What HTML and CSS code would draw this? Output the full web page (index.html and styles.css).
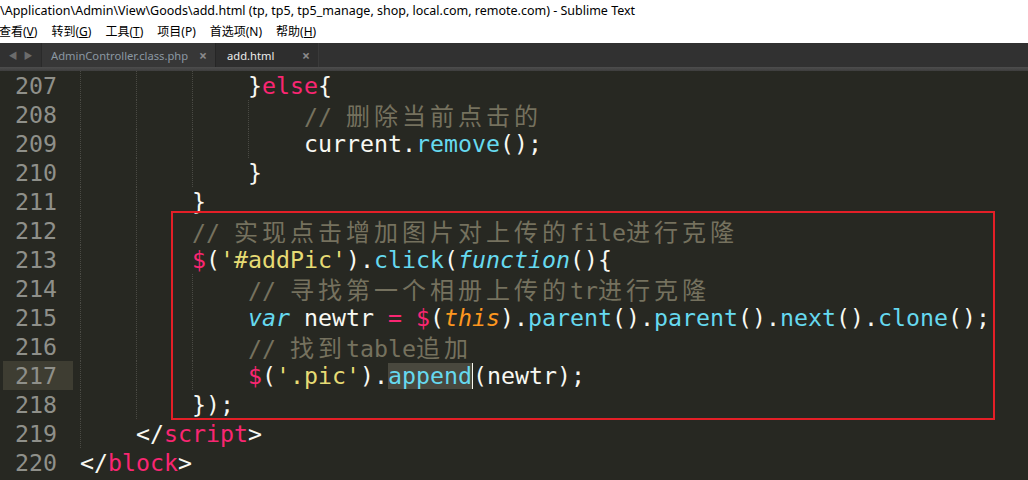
FILE: index.html
```html
<!DOCTYPE html>
<html lang="zh">
<head>
  <meta charset="UTF-8" />
  <title>add.html - Sublime Text</title>
  <link rel="stylesheet" href="styles.css">
</head>
<body>
  <div class="titlebar">\Application\Admin\View\Goods\add.html (tp, tp5, tp5_manage, shop, local.com, remote.com) - Sublime Text</div>

  <div class="menubar">
    <span>查看(<u>V</u>)</span>
    <span>转到(<u>G</u>)</span>
    <span>工具(<u>T</u>)</span>
    <span>项目(P)</span>
    <span>首选项(N)</span>
    <span>帮助(<u>H</u>)</span>
  </div>

  <div class="tabbar">
    <div class="arrows"><span>&#9664;</span><span>&#9654;</span></div>
    <div class="tab">AdminController.class.php<span class="close">&times;</span></div>
    <div class="tab active">add.html<span class="close">&times;</span></div>
  </div>
  <div class="tabstrip"></div>

  <div class="editor">
    <div class="row"><div class="ln">207</div><div class="code"><i class="ind"></i><i class="ind"></i><i class="ind"></i>}<span class="k">else</span>{</div></div>
    <div class="row"><div class="ln">208</div><div class="code"><i class="ind"></i><i class="ind"></i><i class="ind"></i><i class="ind"></i><span class="c">// <span class="cj">删除当前点击的</span></span></div></div>
    <div class="row"><div class="ln">209</div><div class="code"><i class="ind"></i><i class="ind"></i><i class="ind"></i><i class="ind"></i>current.<span class="f">remove</span>();</div></div>
    <div class="row"><div class="ln">210</div><div class="code"><i class="ind"></i><i class="ind"></i><i class="ind"></i>}</div></div>
    <div class="row"><div class="ln">211</div><div class="code"><i class="ind"></i><i class="ind"></i>}</div></div>
    <div class="row"><div class="ln">212</div><div class="code"><i class="ind"></i><i class="ind"></i><span class="c">// <span class="cj">实现点击增加图片对上传的</span>file<span class="cj">进行克隆</span></span></div></div>
    <div class="row"><div class="ln">213</div><div class="code"><i class="ind"></i><i class="ind"></i><span class="k">$</span>(<span class="s">'#addPic'</span>).<span class="f">click</span>(<span class="st">function</span>(){</div></div>
    <div class="row"><div class="ln">214</div><div class="code"><i class="ind"></i><i class="ind"></i><i class="ind"></i><span class="c">// <span class="cj">寻找第一个相册上传的</span>tr<span class="cj">进行克隆</span></span></div></div>
    <div class="row"><div class="ln">215</div><div class="code"><i class="ind"></i><i class="ind"></i><i class="ind"></i><span class="st">var</span> newtr <span class="k">=</span> <span class="k">$</span>(<span class="o">this</span>).<span class="f">parent</span>().<span class="f">parent</span>().<span class="f">next</span>().<span class="f">clone</span>();</div></div>
    <div class="row"><div class="ln">216</div><div class="code"><i class="ind"></i><i class="ind"></i><i class="ind"></i><span class="c">// <span class="cj">找到</span>table<span class="cj">追加</span></span></div></div>
    <div class="row current"><div class="ln">217</div><div class="code"><i class="ind"></i><i class="ind"></i><i class="ind"></i><span class="k">$</span>(<span class="s">'.pic'</span>).<span class="f sel">append</span><span class="caret"></span>(newtr);</div></div>
    <div class="row"><div class="ln">218</div><div class="code"><i class="ind"></i><i class="ind"></i>});</div></div>
    <div class="row"><div class="ln">219</div><div class="code"><i class="ind"></i>&lt;/<span class="k">script</span>&gt;</div></div>
    <div class="row"><div class="ln">220</div><div class="code">&lt;/<span class="k">block</span>&gt;</div></div>

    <div class="mark"></div>
  </div>
</body>
</html>
```

FILE: styles.css
```css
:root {
  --bg: #272822;
  --fg: #f8f8f2;
  --pink: #f92672;
  --cyan: #66d9ef;
  --yellow: #e6db74;
  --orange: #fd971f;
  --comment: #75715e;
  --gutter: #8f908a;
}

* {
  box-sizing: border-box;
  margin: 0;
  padding: 0;
}

body {
  width: 1028px;
  height: 480px;
  overflow: hidden;
  background: var(--bg);
  font-family: 'Noto Sans', 'Noto Sans CJK SC', sans-serif;
}

.titlebar {
  height: 22px;
  line-height: 22px;
  background: #fff;
  color: #000;
  font-size: 12.5px;
  white-space: nowrap;
}

.menubar {
  height: 21px;
  line-height: 20px;
  background: #fff;
  color: #000;
  font-size: 12px;
  display: flex;
  gap: 14px;
  margin-left: -1px;
  white-space: nowrap;
}

.tabbar {
  height: 24px;
  background: #313131;
  display: flex;
  align-items: stretch;
  font-size: 11.2px;
}

.arrows {
  width: 42px;
  display: flex;
  align-items: center;
  justify-content: center;
  gap: 6px;
  color: #6b6b6b;
  font-size: 9px;
  border-right: 1px solid #2a2a2a;
}

.tab {
  display: flex;
  align-items: center;
  padding: 0 8px 0 9px;
  color: #8b98a3;
  background: #373737;
  border-right: 1px solid #262626;
  width: 174px;
  justify-content: space-between;
}

.tab.active {
  background: #2e2e2e;
  color: #ececec;
  width: 103px;
  padding-left: 11px;
  border-right: 1px solid #3a3a3a;
}

.close {
  color: #8a8a8a;
  font-size: 14px;
  font-weight: bold;
}

.tabstrip {
  height: 4px;
  background: linear-gradient(#4d4d4d, #3e3e3e);
}

.editor {
  position: relative;
  font-family: 'DejaVu Sans Mono', monospace;
  font-size: 23.25px;
  color: var(--fg);
}

.row {
  display: flex;
  height: 29px;
  line-height: 29px;
  white-space: pre;
}

.ln {
  width: 70px;
  margin-left: 3px;
  padding-right: 16px;
  text-align: right;
  color: var(--gutter);
}

.current .ln {
  background: #3e3d32;
}

.code {
  padding-left: 7px;
}

.ind {
  display: inline-block;
  vertical-align: top;
  width: 56px;
  height: 29px;
  border-left: 1px dotted #4a4a44;
}

.k { color: var(--pink); }
.f { color: var(--cyan); }
.s { color: var(--yellow); }
.st { color: var(--cyan); font-style: italic; }
.o { color: var(--orange); font-style: italic; }
.c { color: var(--comment); }

.cj {
  font-family: 'Noto Sans CJK SC', sans-serif;
  font-size: 24px;
  letter-spacing: 4px;
}

.sel {
  display: inline-block;
  vertical-align: top;
  background: #49483e;
  margin-top: 2px;
  height: 26px;
  line-height: 25px;
}

.caret {
  display: inline-block;
  vertical-align: top;
  width: 1px;
  height: 26px;
  margin-top: 2px;
  background: #f8f8f0;
}

.mark {
  position: absolute;
  left: 171px;
  top: 140px;
  width: 824px;
  height: 209px;
  border: 2px solid #e41f27;
}
```
